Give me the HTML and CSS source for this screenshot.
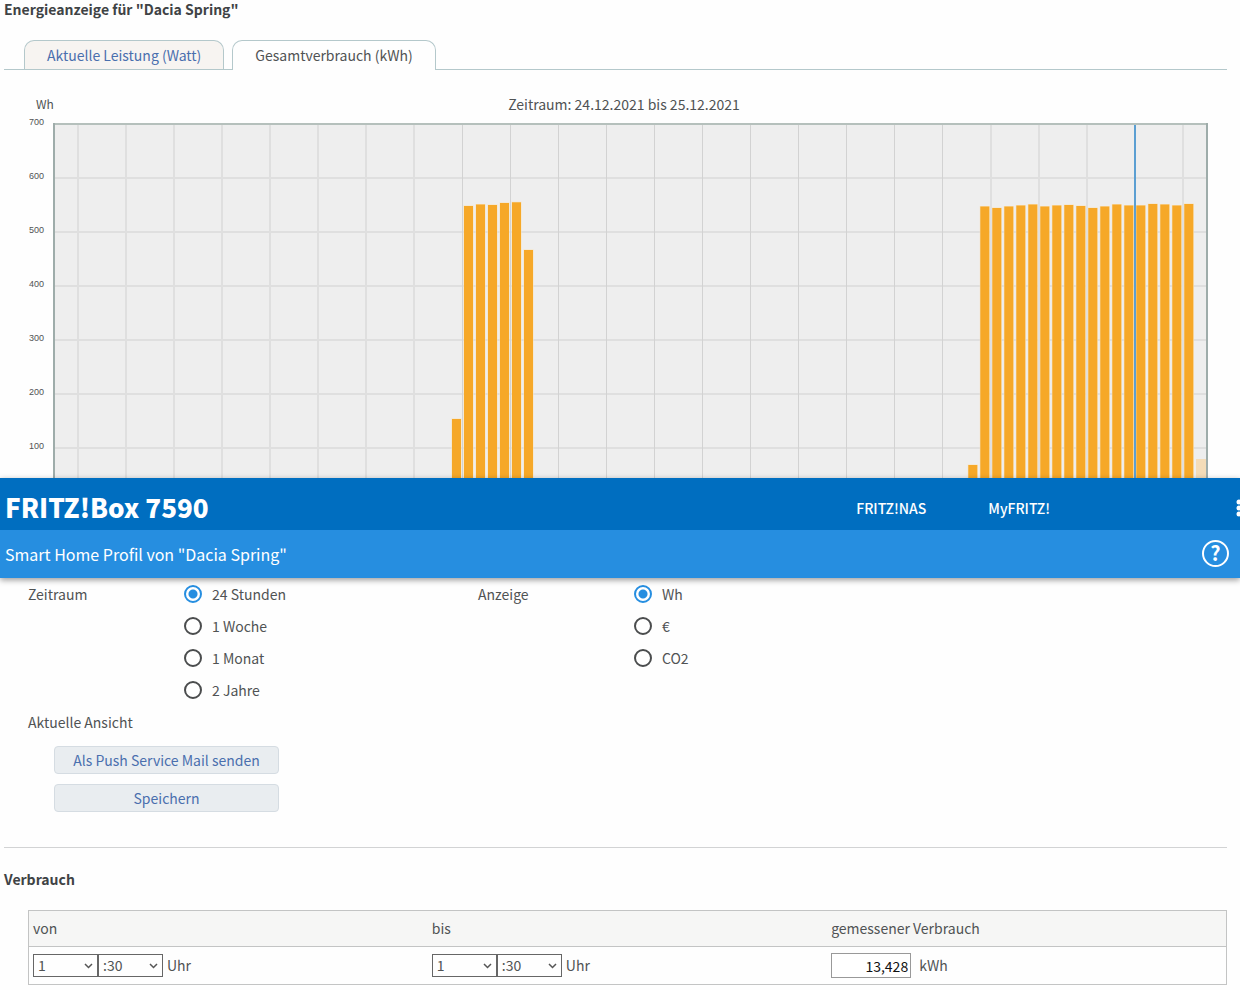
FILE: index.html
```html
<!DOCTYPE html>
<html lang="de">
<head>
    <meta charset="UTF-8">
    <meta name="viewport" content="width=device-width, initial-scale=1.0">
    <title>FRITZ!Box 7590</title>
    <link rel="stylesheet" href="styles.css">
</head>
<body>
    <section class="energy">
        <h2>Energieanzeige für "Dacia Spring"</h2>
        <nav class="tabs">
            <a href="#watt" class="tab">Aktuelle Leistung (Watt)</a>
            <a href="#kwh" class="tab active">Gesamtverbrauch (kWh)</a>
        </nav>
        <div class="chart-head">
            <span class="unit">Wh</span>
            <span class="period">Zeitraum: 24.12.2021 bis 25.12.2021</span>
        </div>
        <div class="chart">
            <div class="axis">
                <span>700</span>
                <span>600</span>
                <span>500</span>
                <span>400</span>
                <span>300</span>
                <span>200</span>
                <span>100</span>
            </div>
            <svg class="plot" viewBox="0 0 1155 361" preserveAspectRatio="none" role="img" aria-label="Gesamtverbrauch">
                <rect class="plot-bg" x="0" y="7" width="1155" height="354"/>
                <path class="grid" d="M0 61H1155M0 115H1155M0 169H1155M0 223H1155M0 277H1155M0 331H1155"/>
                <path class="grid" d="M25 8V361M73 8V361M121 8V361M169 8V361M217 8V361M265 8V361M313 8V361M361 8V361M938 8V361M986 8V361M1034 8V361M1130 8V361"/>
                <path class="grid thin" d="M409.500 8V361M457.500 8V361M505.500 8V361M553.500 8V361M601.500 8V361M649.500 8V361M697.500 8V361M745.500 8V361M793.500 8V361M841.500 8V361M889.500 8V361"/>
                <g class="bars">
                    <rect x="399" y="302" width="9" height="59"/>
                    <rect x="411" y="89" width="9" height="272"/>
                    <rect x="423" y="87.500" width="9" height="274"/>
                    <rect x="435" y="88" width="9" height="273"/>
                    <rect x="447" y="86" width="9" height="275"/>
                    <rect x="459" y="85.300" width="9" height="276"/>
                    <rect x="471" y="133" width="9" height="228"/>
                    <rect x="915.300" y="348" width="9" height="13"/>
                    <rect x="927.300" y="89.500" width="9" height="272"/>
                    <rect x="939.300" y="91" width="9" height="270"/>
                    <rect x="951.300" y="89.500" width="9" height="272"/>
                    <rect x="963.300" y="88.500" width="9" height="273"/>
                    <rect x="975.300" y="87.500" width="9" height="274"/>
                    <rect x="987.300" y="89.500" width="9" height="272"/>
                    <rect x="999.300" y="88.500" width="9" height="273"/>
                    <rect x="1011.300" y="88" width="9" height="273"/>
                    <rect x="1023.300" y="89" width="9" height="272"/>
                    <rect x="1035.300" y="91" width="9" height="270"/>
                    <rect x="1047.300" y="89.500" width="9" height="272"/>
                    <rect x="1059.300" y="87.500" width="9" height="274"/>
                    <rect x="1071.300" y="88.500" width="9" height="273"/>
                    <rect x="1083.300" y="88.500" width="9" height="273"/>
                    <rect x="1095.300" y="87" width="9" height="274"/>
                    <rect x="1107.300" y="87.500" width="9" height="274"/>
                    <rect x="1119.300" y="88.500" width="9" height="273"/>
                    <rect x="1131.300" y="87" width="9" height="274"/>
                    <rect class="pending" x="1143" y="342" width="10" height="19"/>
                </g>
                <path class="cursor" d="M1082 8V361"/>
                <path class="frame-top" d="M0 7H1155"/>
                <path class="frame-side" d="M1 6V361M1154 6V361"/>
            </svg>
        </div>
    </section>

    <header class="box-header">
        <div class="brand-bar">
            <h1>FRITZ!Box 7590</h1>
            <nav class="links">
                <a href="#nas">FRITZ!NAS</a>
                <a href="#myfritz">MyFRITZ!</a>
            </nav>
            <button class="more" type="button" aria-label="Menü">
                <svg width="6" height="18" viewBox="0 0 6 18">
                    <circle cx="3" cy="3" r="2.500"/>
                    <circle cx="3" cy="9" r="2.500"/>
                    <circle cx="3" cy="15" r="2.500"/>
                </svg>
            </button>
        </div>
        <div class="title-bar">
            <span>Smart Home Profil von "Dacia Spring"</span>
            <a class="help" href="#help" aria-label="Hilfe">?</a>
        </div>
    </header>

    <main>
        <form class="options">
            <div class="option-groups">
                <div class="group" role="radiogroup" aria-labelledby="period-label">
                    <span id="period-label">Zeitraum</span>
                    <div class="radios">
                        <label><input type="radio" name="period" checked>24 Stunden</label>
                        <label><input type="radio" name="period">1 Woche</label>
                        <label><input type="radio" name="period">1 Monat</label>
                        <label><input type="radio" name="period">2 Jahre</label>
                    </div>
                </div>
                <div class="group" role="radiogroup" aria-labelledby="display-label">
                    <span id="display-label">Anzeige</span>
                    <div class="radios">
                        <label><input type="radio" name="display" checked>Wh</label>
                        <label><input type="radio" name="display">€</label>
                        <label><input type="radio" name="display">CO2</label>
                    </div>
                </div>
            </div>
            <div class="view">Aktuelle Ansicht</div>
            <div class="actions">
                <button type="button">Als Push Service Mail senden</button>
                <button type="button">Speichern</button>
            </div>
        </form>

        <section class="usage">
            <h2>Verbrauch</h2>
            <table>
                <thead>
                    <tr>
                        <th id="from">von</th>
                        <th id="to">bis</th>
                        <th id="measured">gemessener Verbrauch</th>
                    </tr>
                </thead>
                <tbody>
                    <tr>
                        <td>
                            <div class="fields">
                                <select aria-label="von Stunde"><option>1</option></select>
                                <select aria-label="von Minute"><option>:30</option></select>
                                <span>Uhr</span>
                            </div>
                        </td>
                        <td>
                            <div class="fields">
                                <select aria-label="bis Stunde"><option>1</option></select>
                                <select aria-label="bis Minute"><option>:30</option></select>
                                <span>Uhr</span>
                            </div>
                        </td>
                        <td>
                            <div class="fields">
                                <input type="text" id="kwh-value" value="13,428" aria-labelledby="measured">
                                <label for="kwh-value">kWh</label>
                            </div>
                        </td>
                    </tr>
                </tbody>
            </table>
        </section>
    </main>
</body>
</html>
```
FILE: styles.css
```css
* {
    box-sizing: border-box;
}
body {
    margin: 0;
    background-color: #fefefe;
    color: #505354;
    font-family: "Noto Sans CJK SC", "Open Sans", sans-serif;
    font-size: 14px;
    line-height: 20px;
}
h1, h2 {
    margin: 0;
}
h2 {
    font-size: 14px;
    line-height: 18px;
    color: #3f4345;
}
a {
    text-decoration: none;
}
button, input, select {
    font: inherit;
    margin: 0;
}

/* Energy chart */
.energy {
    padding: 0 13px 0 4px;
}
.tabs {
    display: flex;
    gap: 8px;
    margin-top: 22px;
    padding-left: 20px;
    border-bottom: 1px solid #b4c8cb;
}
.tab {
    padding: 4px 22px;
    border: 1px solid #b4c8cb;
    border-bottom: none;
    border-radius: 10px 10px 0 0;
    background-color: #f7f4f1;
    color: #4a6fae;
}
.tab.active {
    margin-bottom: -1px;
    padding-bottom: 5px;
    background-color: #fefefe;
    color: #505354;
}
.chart-head {
    display: grid;
    grid-template-columns: 1fr auto 1fr;
    align-items: center;
    margin-top: 24px;
    padding-left: 32px;
    padding-right: 15px;
}
.unit {
    font-size: 12px;
}
.chart {
    display: flex;
    height: 364px;
    padding-right: 19px;
    padding-top: 3px;
    overflow: hidden;
}
.axis {
    flex: 0 0 49px;
    padding-right: 9px;
    text-align: right;
    font-family: "Liberation Sans", sans-serif;
    font-size: 9px;
}
.axis span {
    display: block;
    height: 54px;
    line-height: 11px;
}
.plot {
    flex: 1;
    min-width: 0;
    height: 361px;
}
.plot-bg {
    fill: #eeeeee;
}
.grid {
    fill: none;
    stroke: #dfdfdf;
    stroke-width: 2px;
}
.grid.thin {
    stroke: #d2d2d2;
    stroke-width: 1px;
}
.bars {
    fill: #f6a828;
    stroke: #f8e3bd;
    stroke-width: 1px;
    paint-order: stroke;
}
.bars .pending {
    fill: #f4dcb8;
    stroke: none;
}
.cursor {
    stroke: #5b9fd2;
    stroke-width: 2px;
}
.frame-top {
    stroke: #b5c0bc;
    stroke-width: 2px;
}
.frame-side {
    stroke: #9eacaa;
    stroke-width: 2px;
}

/* Header bars */
.box-header {
    position: relative;
    color: #fff;
    box-shadow: 0 2px 6px rgba(0, 0, 0, 0.4);
}
.brand-bar {
    display: flex;
    align-items: center;
    height: 52px;
    padding-left: 5px;
    padding-top: 8px;
    background-color: #006ec0;
    overflow: hidden;
}
.brand-bar h1 {
    flex: 1;
    font-size: 26px;
    line-height: 38px;
    padding-bottom: 2px;
    font-weight: 900;
}
.links {
    display: flex;
    gap: 62px;
    margin-right: 186px;
}
.links a {
    color: #fff;
    font-weight: 500;
}
.more {
    width: 4px;
    height: 18px;
    padding: 0;
    border: none;
    background: none;
    overflow: hidden;
}
.more svg {
    display: block;
    fill: #fff;
}
.title-bar {
    display: flex;
    align-items: center;
    justify-content: space-between;
    height: 48px;
    padding: 0 11px 0 5px;
    background-color: #268ee0;
    font-size: 16px;
}
.help {
    width: 27px;
    height: 27px;
    margin-bottom: 2px;
    border: 2px solid #fff;
    border-radius: 50%;
    color: #fff;
    font-size: 20px;
    font-weight: 700;
    line-height: 22px;
    text-align: center;
}

/* Options */
main {
    padding: 0 13px 0 4px;
}
.options {
    padding: 0 24px 35px;
    border-bottom: 1px solid #d2d3d4;
}
.option-groups {
    display: flex;
}
.group {
    display: flex;
    width: 450px;
    line-height: 32px;
}
.group > span {
    width: 156px;
}
.group label {
    display: flex;
    align-items: center;
    gap: 10px;
}
input[type="radio"] {
    appearance: none;
    width: 18px;
    height: 18px;
    border: 2px solid #4b4d4e;
    border-radius: 50%;
    background-color: #fff;
}
input[type="radio"]:checked {
    border-color: #268ee0;
    background: radial-gradient(circle, #268ee0 4px, #fff 5px);
}
.view {
    line-height: 32px;
}
.actions {
    display: flex;
    flex-direction: column;
    gap: 10px;
    width: 251px;
    margin-top: 8px;
    padding-left: 26px;
}
.actions button {
    height: 28px;
    padding: 0;
    border: 1px solid #d5dce2;
    border-radius: 4px;
    background-color: #e9edf0;
    color: #4a6fae;
    cursor: pointer;
}

/* Usage table */
.usage {
    padding-top: 22px;
}
.usage table {
    width: calc(100% - 24px);
    margin: 22px 0 0 24px;
    border: 1px solid #c3c4c4;
    border-collapse: collapse;
    table-layout: fixed;
}
th, td {
    height: 36px;
    padding: 0 4px;
    text-align: left;
    font-weight: 400;
}
th {
    padding-bottom: 2px;
}
thead tr {
    background-color: #f6f6f5;
    border-bottom: 1px solid #c3c4c4;
}
td {
    height: 38px;
}
.fields {
    display: flex;
    align-items: center;
}
.fields span,
.fields label {
    padding-bottom: 2px;
}
.fields span {
    margin-left: 4px;
}
.fields label {
    margin-left: 8px;
}
.fields select {
    appearance: none;
    width: 65px;
    height: 23px;
    padding: 0 4px 1px;
    border: 1px solid #666;
    border-radius: 0;
    color: #505354;
    line-height: 20px;
    background: #fefefe url("data:image/svg+xml,%3Csvg xmlns='http://www.w3.org/2000/svg' width='9' height='6'%3E%3Cpath d='M1 1l3.5 3.5L8 1' fill='none' stroke='%23555' stroke-width='1.500'/%3E%3C/svg%3E") no-repeat right 4px center;
}
.fields input {
    width: 80px;
    height: 25px;
    padding: 0 2px;
    border: 1px solid #999;
    background-color: #fff;
    color: #111;
    text-align: right;
}
```
